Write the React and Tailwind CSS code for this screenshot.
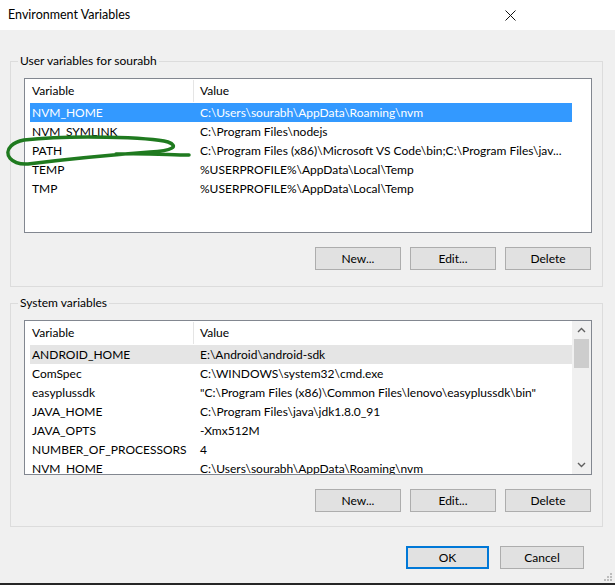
import React from "react";

const userRows = [
  ["NVM_HOME", "C:\\Users\\sourabh\\AppData\\Roaming\\nvm"],
  ["NVM_SYMLINK", "C:\\Program Files\\nodejs"],
  ["PATH", "C:\\Program Files (x86)\\Microsoft VS Code\\bin;C:\\Program Files\\jav..."],
  ["TEMP", "%USERPROFILE%\\AppData\\Local\\Temp"],
  ["TMP", "%USERPROFILE%\\AppData\\Local\\Temp"],
];

const sysRows = [
  ["ANDROID_HOME", "E:\\Android\\android-sdk"],
  ["ComSpec", "C:\\WINDOWS\\system32\\cmd.exe"],
  ["easyplussdk", "\"C:\\Program Files (x86)\\Common Files\\lenovo\\easyplussdk\\bin\""],
  ["JAVA_HOME", "C:\\Program Files\\java\\jdk1.8.0_91"],
  ["JAVA_OPTS", "-Xmx512M"],
  ["NUMBER_OF_PROCESSORS", "4"],
  ["NVM_HOME", "C:\\Users\\sourabh\\AppData\\Roaming\\nvm"],
];

function Btn({ children, primary, wide }) {
  return (
    <div
      className={
        primary
          ? "w-[83px] h-[23px] flex items-center justify-center bg-[#e1e1e1] border-2 border-[#0078d7] text-[12px] text-black"
          : wide
          ? "w-[84px] h-[23px] flex items-center justify-center bg-[#e1e1e1] border border-[#adadad] text-[12px] text-black"
          : "w-[86px] h-[23px] flex items-center justify-center bg-[#e1e1e1] border border-[#adadad] text-[12px] text-black"
      }
    >
      {children}
    </div>
  );
}

function Chevron({ up }) {
  return (
    <svg width="9" height="6" viewBox="0 0 9 6">
      <path
        d={up ? "M1 5 L4.5 1.5 L8 5" : "M1 1 L4.5 4.5 L8 1"}
        fill="none"
        stroke="#606060"
        strokeWidth="1.4"
      />
    </svg>
  );
}

function ListView({ rows, mode, scrollbar }) {
  return (
    <div className="w-[568px] h-[155px] border border-[#828790] bg-white flex overflow-hidden">
      <div className="w-[547px] pl-[5px] flex flex-col">
        <div className="h-[24px] flex items-center text-[12px] text-black shrink-0">
          <div className="w-[163px] pl-[2px]">Variable</div>
          <div className="h-[22px] flex items-center border-l border-[#e5e5e5] pl-[6px]">Value</div>
        </div>
        {rows.map((r, i) => {
          const sel = i === 0;
          const cls =
            sel && mode === "blue"
              ? "h-[19px] flex items-center text-[12px] bg-[#3399ff] text-white shrink-0 whitespace-nowrap"
              : sel && mode === "gray"
              ? "h-[19px] flex items-center text-[12px] bg-[#e5e5e5] text-black shrink-0 whitespace-nowrap"
              : "h-[19px] flex items-center text-[12px] text-black shrink-0 whitespace-nowrap";
          return (
            <div key={i} className={cls}>
              <div className="w-[163px] pl-[2px]">{r[0]}</div>
              <div className="pl-[7px]">{r[1]}</div>
            </div>
          );
        })}
      </div>
      {scrollbar ? (
        <div className="flex-1 bg-[#f0f0f0] flex flex-col items-center">
          <div className="h-[18px] w-full flex items-center justify-center">
            <Chevron up />
          </div>
          <div className="w-[15px] h-[29px] bg-[#cdcdcd]" />
          <div className="flex-1" />
          <div className="h-[18px] w-full flex items-center justify-center">
            <Chevron />
          </div>
        </div>
      ) : (
        <div className="flex-1" />
      )}
    </div>
  );
}

function Group({ title, rows, mode, scrollbar, top }) {
  return (
    <fieldset
      className={
        top
          ? "mt-[23px] ml-[10px] w-[593px] border border-[#dcdcdc] px-0 pb-[16px] m-0"
          : "mt-[8px] ml-[10px] w-[593px] border border-[#dcdcdc] px-0 pb-[14px] m-0"
      }
    >
      <legend className="ml-[7px] px-[2px] text-[12px] leading-[16px] text-black">{title}</legend>
      <div className="pl-[13px] pt-[9px]">
        <ListView rows={rows} mode={mode} scrollbar={scrollbar} />
      </div>
      <div className="flex justify-end gap-[9px] pr-[11px] mt-[14px]">
        <Btn>New...</Btn>
        <Btn>Edit...</Btn>
        <Btn>Delete</Btn>
      </div>
    </fieldset>
  );
}

export default function App() {
  return (
    <div className="relative w-[615px] h-[585px] bg-[#f0f0f0] flex flex-col overflow-hidden font-['Lato','Noto_Sans',sans-serif] text-black">
      <div className="h-[30px] bg-white flex items-center justify-between pl-[8px] pr-[99px] shrink-0">
        <span className="text-[12.5px]">Environment Variables</span>
        <svg width="11" height="11" viewBox="0 0 11 11">
          <path d="M0.5 0.5 L10.5 10.5 M10.5 0.5 L0.5 10.5" stroke="#111" strokeWidth="1" />
        </svg>
      </div>

      <Group title="User variables for sourabh" rows={userRows} mode="blue" top />
      <Group title="System variables" rows={sysRows} mode="gray" scrollbar />

      <div className="flex justify-end gap-[11px] pr-[31px] mt-[19px]">
        <Btn primary>OK</Btn>
        <Btn wide>Cancel</Btn>
      </div>
      <div className="flex-1" />
      <div className="h-[2px] bg-[#262626] shrink-0" />

      {/* resize grip */}
      <svg className="absolute right-[3px] bottom-[4px]" width="9" height="9" viewBox="0 0 9 9">
        <rect x="7" y="1" width="2" height="2" fill="#bdbdbd" />
        <rect x="4" y="4" width="2" height="2" fill="#bdbdbd" />
        <rect x="7" y="4" width="2" height="2" fill="#bdbdbd" />
        <rect x="1" y="7" width="2" height="2" fill="#bdbdbd" />
        <rect x="4" y="7" width="2" height="2" fill="#bdbdbd" />
        <rect x="7" y="7" width="2" height="2" fill="#bdbdbd" />
      </svg>

      {/* green hand-drawn annotation */}
      <svg className="absolute left-0 top-[130px] pointer-events-none" width="200" height="45" viewBox="0 130 200 45">
        <path
          d="M24 140 C70 135 150 137 168 142 C179 146 173 151 150 152 C110 155 60 160 28 164 C11 165 3 154 11 146 C15 142 19 141 24 140 M116 154 C150 153 170 155 189 155"
          fill="none"
          stroke="#1f7a1f"
          strokeWidth="3.5"
          strokeLinecap="round"
          strokeLinejoin="round"
        />
      </svg>
    </div>
  );
}
